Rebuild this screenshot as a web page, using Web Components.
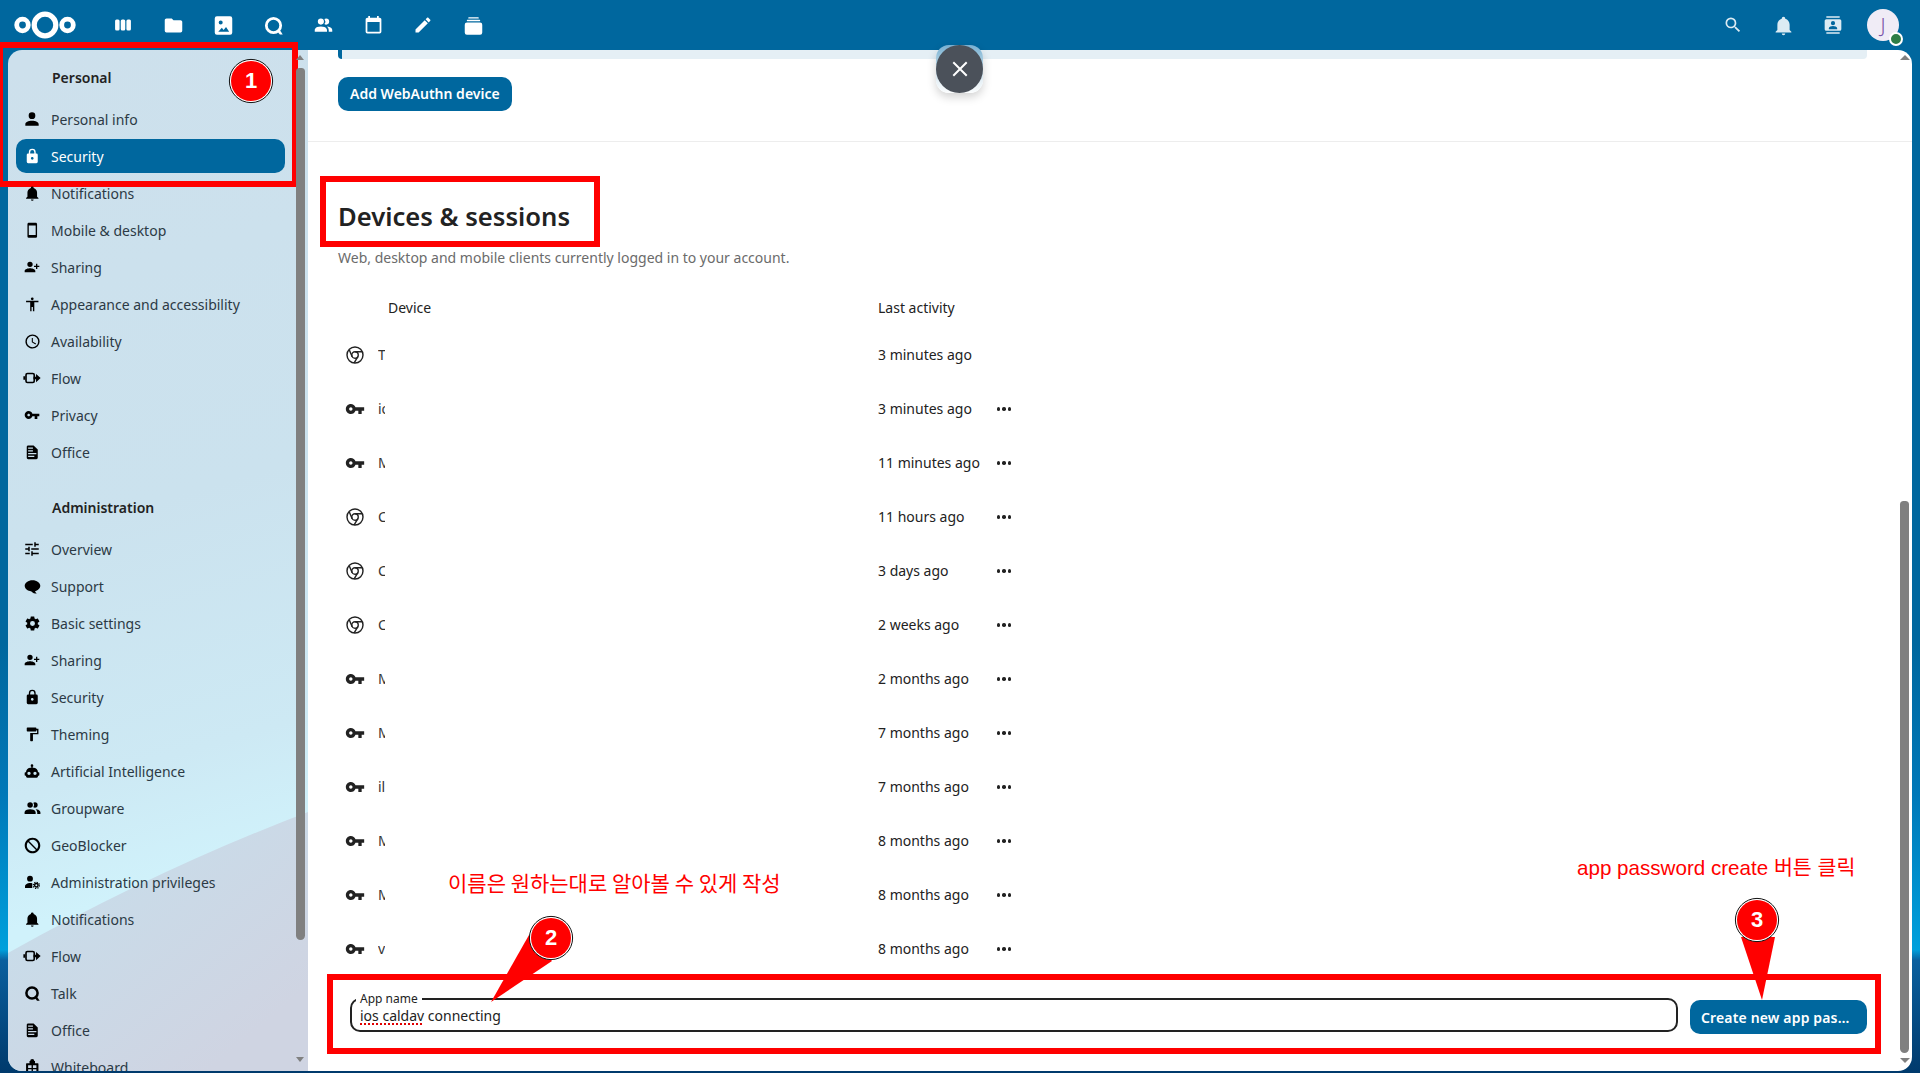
<!DOCTYPE html>
<html lang="en"><head><meta charset="utf-8"><title>Security</title>
<style>
html,body{margin:0;padding:0;height:1073px;overflow:hidden}
body{font:14px/20px "Noto Sans","Noto Sans CJK KR",sans-serif;color:#222;position:relative;
background:linear-gradient(180deg,#00679e 0,#00679e 60%,#0078b8 74%,#00a0dc 88.5%,#0a5f9e 89.5%,#003a6c 100%)}
</style></head><body>
<nc-app>
  <nc-header></nc-header>
  <nc-nav>
    <nc-caption>Personal</nc-caption>
    <nc-item icon="account">Personal info</nc-item>
    <nc-item icon="lock" active>Security</nc-item>
    <nc-item icon="bell">Notifications</nc-item>
    <nc-item icon="phone">Mobile &amp; desktop</nc-item>
    <nc-item icon="share">Sharing</nc-item>
    <nc-item icon="human">Appearance and accessibility</nc-item>
    <nc-item icon="clock">Availability</nc-item>
    <nc-item icon="flow">Flow</nc-item>
    <nc-item icon="key">Privacy</nc-item>
    <nc-item icon="doc">Office</nc-item>
    <nc-caption second>Administration</nc-caption>
    <nc-item icon="tune">Overview</nc-item>
    <nc-item icon="bubble">Support</nc-item>
    <nc-item icon="cog">Basic settings</nc-item>
    <nc-item icon="share">Sharing</nc-item>
    <nc-item icon="lock">Security</nc-item>
    <nc-item icon="roller">Theming</nc-item>
    <nc-item icon="robot">Artificial Intelligence</nc-item>
    <nc-item icon="group">Groupware</nc-item>
    <nc-item icon="cancel">GeoBlocker</nc-item>
    <nc-item icon="admin">Administration privileges</nc-item>
    <nc-item icon="bell">Notifications</nc-item>
    <nc-item icon="flow">Flow</nc-item>
    <nc-item icon="talk">Talk</nc-item>
    <nc-item icon="doc">Office</nc-item>
    <nc-item icon="board">Whiteboard</nc-item>
  </nc-nav>
  <nc-main>
    <nc-sessions>
      <nc-session icon="chrome" name="T" time="3 minutes ago" plain></nc-session>
      <nc-session icon="key" name="io" time="3 minutes ago"></nc-session>
      <nc-session icon="key" name="M" time="11 minutes ago"></nc-session>
      <nc-session icon="chrome" name="C" time="11 hours ago"></nc-session>
      <nc-session icon="chrome" name="C" time="3 days ago"></nc-session>
      <nc-session icon="chrome" name="C" time="2 weeks ago"></nc-session>
      <nc-session icon="key" name="M" time="2 months ago"></nc-session>
      <nc-session icon="key" name="M" time="7 months ago"></nc-session>
      <nc-session icon="key" name="il" time="7 months ago"></nc-session>
      <nc-session icon="key" name="M" time="8 months ago"></nc-session>
      <nc-session icon="key" name="M" time="8 months ago"></nc-session>
      <nc-session icon="key" name="v" time="8 months ago"></nc-session>
    </nc-sessions>
  </nc-main>
</nc-app>
<nc-close></nc-close>
<nc-frame style="left:-3px;top:42px;width:301px;height:145px"></nc-frame>
<nc-frame style="left:320px;top:176px;width:280px;height:71px"></nc-frame>
<nc-frame style="left:327px;top:974px;width:1554px;height:80px"></nc-frame>
<nc-callout n="1" style="left:229px;top:59px"></nc-callout>
<nc-callout n="2" tail="529,935 552,961 491,1002" style="left:529px;top:916px"></nc-callout>
<nc-callout n="3" tail="1741,937 1775,937 1762,1000" style="left:1735px;top:898px"></nc-callout>
<nc-note style="left:448px;top:867px">이름은 원하는대로 알아볼 수 있게 작성</nc-note>
<nc-note latin style="left:1577px;top:853px">app password create 버튼 클릭</nc-note>
<script>
const P={
account:'M12,4A4,4 0 0,1 16,8A4,4 0 0,1 12,12A4,4 0 0,1 8,8A4,4 0 0,1 12,4M12,14C16.42,14 20,15.79 20,18V20H4V18C4,15.79 7.58,14 12,14Z',
lock:'M12,17A2,2 0 0,0 14,15C14,13.89 13.1,13 12,13A2,2 0 0,0 10,15A2,2 0 0,0 12,17M18,8A2,2 0 0,1 20,10V20A2,2 0 0,1 18,22H6A2,2 0 0,1 4,20V10C4,8.89 4.9,8 6,8H7V6A5,5 0 0,1 12,1A5,5 0 0,1 17,6V8H18M12,3A3,3 0 0,0 9,6V8H15V6A3,3 0 0,0 12,3Z',
bell:'M21,19V20H3V19L5,17V11C5,7.9 7.03,5.17 10,4.29C10,4.19 10,4.1 10,4A2,2 0 0,1 12,2A2,2 0 0,1 14,4C14,4.1 14,4.19 14,4.29C16.97,5.17 19,7.9 19,11V17L21,19M14,21A2,2 0 0,1 12,23A2,2 0 0,1 10,21',
phone:'M17,19H7V5H17M17,1H7C5.89,1 5,1.89 5,3V21A2,2 0 0,0 7,23H17A2,2 0 0,0 19,21V3C19,1.89 18.1,1 17,1Z',
share:'M9,14C11.67,14 17,15.33 17,18V20H1V18C1,15.33 6.33,14 9,14M18,10V7H20V10H23V12H20V15H18V12H15V10M9,12A4,4 0 0,1 5,8A4,4 0 0,1 9,4A4,4 0 0,1 13,8A4,4 0 0,1 9,12Z',
human:'M21,9H15V22H13V16H11V22H9V9H3V7H21M12,2A2,2 0 0,1 14,4A2,2 0 0,1 12,6C10.89,6 10,5.1 10,4C10,2.89 10.89,2 12,2Z',
clock:'M12,20A8,8 0 0,0 20,12A8,8 0 0,0 12,4A8,8 0 0,0 4,12A8,8 0 0,0 12,20M12,2A10,10 0 0,1 22,12A10,10 0 0,1 12,22C6.47,22 2,17.5 2,12A10,10 0 0,1 12,2M12.5,7V12.25L17,14.92L16.25,16.15L11,13V7H12.5Z',
key:'M7 14C5.9 14 5 13.1 5 12S5.9 10 7 10 9 10.9 9 12 8.1 14 7 14M12.6 10C11.8 7.7 9.6 6 7 6C3.7 6 1 8.7 1 12S3.7 18 7 18C9.6 18 11.8 16.3 12.6 14H16V18H20V14H23V10H12.6Z',
doc:'M6,2H14L20,8V20A2,2 0 0,1 18,22H6C4.89,22 4,21.1 4,20V4C4,2.89 4.89,2 6,2M13,9H6V11H13V9M18,13H6V15H18V13M15,17H6V19H15V17M13,5H6V7H13V5Z',
tune:'M3,17V19H9V17H3M3,5V7H13V5H3M13,21V19H21V17H13V15H11V21H13M7,9V11H3V13H7V15H9V9H7M21,13V11H11V13H21M15,9H17V7H21V5H17V3H15V9Z',
bubble:'M12,3C18,3 23,6.6 23,11C23,15 19,18 15.5,18.6C16,20 17,21 18,22C15,22 12.5,21 10.5,18.9C5,18.4 1,15 1,11C1,6.6 6,3 12,3Z',
cog:'M12,15.5A3.5,3.5 0 0,1 8.5,12A3.5,3.5 0 0,1 12,8.5A3.5,3.5 0 0,1 15.5,12A3.5,3.5 0 0,1 12,15.5M19.43,12.97C19.47,12.65 19.5,12.33 19.5,12C19.5,11.67 19.47,11.34 19.43,11L21.54,9.37C21.73,9.22 21.78,8.95 21.66,8.73L19.66,5.27C19.54,5.05 19.27,4.96 19.05,5.05L16.56,6.05C16.04,5.66 15.5,5.32 14.87,5.07L14.5,2.42C14.46,2.18 14.25,2 14,2H10C9.75,2 9.54,2.18 9.5,2.42L9.13,5.07C8.5,5.32 7.96,5.66 7.44,6.05L4.95,5.05C4.73,4.96 4.46,5.05 4.34,5.27L2.34,8.73C2.21,8.95 2.27,9.22 2.46,9.37L4.57,11C4.53,11.34 4.5,11.67 4.5,12C4.5,12.33 4.53,12.65 4.57,12.97L2.46,14.63C2.27,14.78 2.21,15.05 2.34,15.27L4.34,18.73C4.46,18.95 4.73,19.03 4.95,18.95L7.44,17.94C7.96,18.34 8.5,18.68 9.13,18.93L9.5,21.58C9.54,21.82 9.75,22 10,22H14C14.25,22 14.46,21.82 14.5,21.58L14.87,18.93C15.5,18.67 16.04,18.34 16.56,17.94L19.05,18.95C19.27,19.03 19.54,18.95 19.66,18.73L21.66,15.27C21.78,15.05 21.73,14.78 21.54,14.63L19.43,12.97Z',
roller:'M18,4V3A1,1 0 0,0 17,2H5A1,1 0 0,0 4,3V7A1,1 0 0,0 5,8H17A1,1 0 0,0 18,7V6H19V10H9V21A1,1 0 0,0 10,22H12A1,1 0 0,0 13,21V12H21V4H18Z',
robot:'M12,2A2,2 0 0,1 14,4C14,4.74 13.6,5.39 13,5.73V7H14A7,7 0 0,1 21,14H22A1,1 0 0,1 23,15V18A1,1 0 0,1 22,19H21V20A2,2 0 0,1 19,22H5A2,2 0 0,1 3,20V19H2A1,1 0 0,1 1,18V15A1,1 0 0,1 2,14H3A7,7 0 0,1 10,7H11V5.73C10.4,5.39 10,4.74 10,4A2,2 0 0,1 12,2M7.5,13A2.5,2.5 0 0,0 5,15.5A2.5,2.5 0 0,0 7.5,18A2.5,2.5 0 0,0 10,15.5A2.5,2.5 0 0,0 7.5,13M16.5,13A2.5,2.5 0 0,0 14,15.5A2.5,2.5 0 0,0 16.5,18A2.5,2.5 0 0,0 19,15.5A2.5,2.5 0 0,0 16.5,13Z',
group:'M16 17V19H2V17S2 13 9 13 16 17 16 17M12.5 7.5A3.5 3.5 0 1 0 9 11A3.5 3.5 0 0 0 12.5 7.5M15.94 13A5.32 5.32 0 0 1 18 17V19H22V17S22 13.37 15.94 13M15 4A3.39 3.39 0 0 0 13.07 4.59A5 5 0 0 1 13.07 10.41A3.39 3.39 0 0 0 15 11A3.5 3.5 0 0 0 15 4Z',
cancel:'M12 1C18 1 23 6 23 12S18 23 12 23 1 18 1 12 6 1 12 1M12 4C10.1 4 8.4 4.6 7.1 5.7L18.3 16.9C19.3 15.5 20 13.8 20 12C20 7.6 16.4 4 12 4M16.9 18.3L5.7 7.1C4.6 8.4 4 10.1 4 12C4 16.4 7.6 20 12 20C13.9 20 15.6 19.4 16.9 18.3Z',
folder:'M10,4H4C2.89,4 2,4.89 2,6V18A2,2 0 0,0 4,20H20A2,2 0 0,0 22,18V8C22,6.89 21.1,6 20,6H12L10,4Z',
calendar:'M19,19H5V8H19M16,1V3H8V1H6V3H5C3.89,3 3,3.89 3,5V19A2,2 0 0,0 5,21H19A2,2 0 0,0 21,19V5C21,3.89 20.1,3 19,3H18V1',
pencil:'M20.71,7.04C21.1,6.65 21.1,6 20.71,5.63L18.37,3.29C18,2.9 17.35,2.9 16.96,3.29L15.12,5.12L18.87,8.87M3,17.25V21H6.75L17.81,9.93L14.06,6.18L3,17.25Z',
search:'M9.5,3A6.5,6.5 0 0,1 16,9.5C16,11.11 15.41,12.59 14.44,13.73L14.71,14H15.5L20.5,19L19,20.5L14,15.5V14.71L13.73,14.44C12.59,15.41 11.11,16 9.5,16A6.5,6.5 0 0,1 3,9.5A6.5,6.5 0 0,1 9.5,3M9.5,5C7,5 5,7 5,9.5C5,12 7,14 9.5,14C12,14 14,12 14,9.5C14,7 12,5 9.5,5Z'
};
const X={
flow:'<rect x="4" y="6" width="11" height="12" rx="2" fill="none" stroke="currentColor" stroke-width="2.2"/><path d="M.5 9.8h2.5v4.4H.5zM14 10.2h3.4V6.5L23.5 12l-6.1 5.5v-3.7H14z"/>',
admin:'<circle cx="9" cy="7" r="4.4"/><path d="M1.5 21v-2.6c0-3 4-5 7.5-5 1.2 0 2.3.2 3.4.6V21z"/><circle cx="18.5" cy="17" r="2.6" fill="none" stroke="currentColor" stroke-width="2.2"/><circle cx="18.5" cy="17" r="4.6" fill="none" stroke="currentColor" stroke-width="1.8" stroke-dasharray="1.8 1.8"/>',
talk:'<circle cx="12" cy="12" r="8.4" fill="none" stroke="currentColor" stroke-width="3.8"/><path d="M16 19l2.5-3 5 7.5h-4z"/>',
board:'<path fill-rule="evenodd" d="M9 3a3 3 0 0 1 6 0h1v3h4a1 1 0 0 1 1 1v13a1 1 0 0 1-1 1H4a1 1 0 0 1-1-1V7a1 1 0 0 1 1-1h4V3zM6 9v4h5V9zm7 0v4h5V9zm-7 6v4h5v-4zm7 0v4h5v-4z"/>',
apps:'<rect x="2.5" y="5.5" width="5.4" height="13" rx="1.8"/><rect x="9.3" y="5.5" width="5.4" height="13" rx="1.8"/><rect x="16.1" y="5.5" width="5.4" height="13" rx="1.8"/>',
photos:'<path fill-rule="evenodd" d="M4.5 1.5h15a2.5 2.5 0 0 1 2.5 2.5v16a2.5 2.5 0 0 1-2.5 2.5h-15A2.5 2.5 0 0 1 2 20V4a2.5 2.5 0 0 1 2.5-2.5zM6 19h12.5l-3.6-5.2-2.8 3.2-2-2.4zM8.8 6.3a2.3 2.3 0 1 0 0 4.6 2.3 2.3 0 0 0 0-4.6z"/>',
talkh:'<circle cx="12" cy="12" r="8.2" fill="none" stroke="currentColor" stroke-width="3.2"/><path d="M16.5 19l2-3 4 6.4h-3.2z"/>',
deck:'<rect x="6" y="2.5" width="12" height="1.6" rx=".5"/><rect x="4.4" y="5.4" width="15.2" height="1.8" rx=".5"/><path d="M4.5 8.5h15A2.5 2.5 0 0 1 22 11v9a2.5 2.5 0 0 1-2.5 2.5h-15A2.5 2.5 0 0 1 2 20v-9a2.5 2.5 0 0 1 2.5-2.5z"/>',
contacts:'<rect x="4" y="1.5" width="16" height="1.8" /><rect x="4" y="20.7" width="16" height="1.8"/><path fill-rule="evenodd" d="M4 5h16a2 2 0 0 1 2 2v10a2 2 0 0 1-2 2H4a2 2 0 0 1-2-2V7a2 2 0 0 1 2-2zm8 2.3a2.5 2.5 0 1 0 0 5 2.5 2.5 0 0 0 0-5zM7 17h10v-1.2c0-1.6-3-2.5-5-2.5s-5 .9-5 2.5z"/>',
chrome:'<g fill="none" stroke="currentColor" stroke-width="1.7"><circle cx="12" cy="12" r="9.6"/><circle cx="12" cy="12" r="3.9"/><path d="M12 8.1H20.4M8.6 14 5.2 6M15.4 14 11 21.4"/></g>'
};
const NAVSIZE={account:20,tune:18,group:19,share:16,key:16,cancel:17,flow:18,bubble:17,cog:17,robot:16,clock:17,talk:16,admin:16};
function ic(n,s){const body=P[n]?`<path d="${P[n]}"/>`:X[n];return `<svg xmlns="http://www.w3.org/2000/svg" width="${s}" height="${s}" viewBox="0 0 24 24" fill="currentColor" style="display:block;flex:none">${body}</svg>`}
function def(name,html,init){customElements.define(name,class extends HTMLElement{constructor(){super();this.attachShadow({mode:'open'})}
 connectedCallback(){this.shadowRoot.innerHTML=typeof html==='function'?html(this):html;init&&init(this)}})}

def('nc-app',`<style>:host{display:grid;grid-template-columns:300px 1604px;grid-template-rows:50px 1021px;padding:0 8px;height:1073px;box-sizing:border-box}
::slotted(nc-header){grid-column:1/3;margin:0 -8px}</style><slot></slot>`);

def('nc-header',()=>{
 const L=['apps','folder','photos','talkh','group','calendar','pencil','deck'];
 return `<style>:host{display:flex;align-items:center;height:50px;color:#fff}
 .logo{margin-left:12px;width:66px;flex:none}
 .apps{display:flex;margin-left:20px}.b{width:50px;height:50px;display:flex;align-items:center;justify-content:center}
 .right{margin-left:auto;display:flex;color:#dcebf3;margin-right:12px}
 .av{width:32px;height:32px;border-radius:50%;background:#f0ecf6;color:#7a52a8;font:300 20px/32px "Noto Sans",sans-serif;text-align:center;position:relative;margin:9px}
 .dot{position:absolute;left:22px;top:23px;width:10px;height:10px;border-radius:50%;background:#2e7d46;border:2px solid #fff}
 </style>
 <svg class="logo" viewBox="0 0 66 30" height="30"><g fill="none" stroke="#fff"><circle cx="10.5" cy="15" r="5.8" stroke-width="4.8"/><circle cx="33" cy="15" r="10.8" stroke-width="5.2"/><circle cx="55.5" cy="15" r="5.8" stroke-width="4.8"/></g></svg>
 <div class="apps">${L.map(n=>`<div class="b">${ic(n,n==='pencil'||n==='apps'?20:21)}</div>`).join('')}</div>
 <div class="right"><div class="b">${ic('search',20)}</div><div class="b">${ic('bell',21)}</div><div class="b">${ic('contacts',20)}</div><div class="av">J<span class="dot"></span></div></div>`});

def('nc-nav',`<style>:host{display:block;position:relative;height:1021px;overflow:hidden;border-radius:14px 0 0 14px}
 .bg{position:absolute;left:0;top:0;z-index:0}
 .list{position:relative;z-index:1;padding:10px 0 0 8px}
 .sb{position:absolute;left:288px;width:9px;background:#808080;z-index:2}
 .ar{position:absolute;left:288px;width:0;height:0;border-left:4.5px solid transparent;border-right:4.5px solid transparent;z-index:2}
 </style>
 <svg class="bg" width="300" height="1021" viewBox="0 0 300 1021"><defs>
 <linearGradient id="u" gradientUnits="userSpaceOnUse" x1="60" y1="0" x2="288" y2="800"><stop offset="0" stop-color="#cde0ec"/><stop offset=".55" stop-color="#cbe2ee"/><stop offset=".85" stop-color="#cde9f4"/><stop offset="1" stop-color="#d0f2fb"/></linearGradient>
 <linearGradient id="l" gradientUnits="userSpaceOnUse" x1="0" y1="780" x2="200" y2="1021"><stop offset="0" stop-color="#c6dfec"/><stop offset="1" stop-color="#cfd4e2"/></linearGradient></defs>
 <rect width="300" height="1021" fill="url(#u)"/><path d="M0 903Q150 819 300 762V1021H0Z" fill="url(#l)"/></svg>
 <div class="ar" style="top:5px;border-bottom:5px solid #808080"></div>
 <div class="sb" style="top:18px;height:872px;border-radius:4px 4px 5px 5px"></div>
 <div class="ar" style="top:1007px;border-top:5px solid #808080"></div>
 <div class="list"><slot></slot></div>`);

def('nc-caption',`<style>:host{display:block;height:34px;line-height:36px;padding-left:36px;font-weight:600;font-size:14px;color:#222;margin-bottom:8px}
 :host([second]){margin-top:21px}</style><slot></slot>`);

def('nc-item',el=>`<style>:host{display:flex;align-items:center;height:34px;margin-bottom:3px;border-radius:10px;width:269px;color:#2c3a45;font-size:14px}
 :host([active]){background:#00679e;color:#fff}
 .i{width:32px;display:flex;justify-content:center;color:#000;flex:none}
 :host([active]) .i{color:#fff}
 .t{margin-left:3px;white-space:nowrap;padding-top:1px}</style>
 <span class="i">${ic(el.getAttribute('icon'),NAVSIZE[el.getAttribute('icon')]||16.5)}</span><span class="t"><slot></slot></span>`);

def('nc-main',`<style>:host{display:flex;flex-direction:column;background:#fff;border-radius:0 14px 14px 0;height:1021px;position:relative;overflow:hidden}
 .band{height:9px;margin:0 45px 0 30px;background:#e5eff5;border-left:4px solid #00679e;border-radius:0 0 4px 4px;flex:none}
 .top{padding:18px 30px 30px;border-bottom:1px solid #ededed;flex:none;height:34px}
 .btn{display:inline-block;height:34px;line-height:34px;padding:0 12px;background:#00679e;color:#fff;border-radius:10px;font-weight:600;font-size:14px}
 .sec{padding:60px 45px 0 30px;flex:1}
 h2{margin:0;font-size:25.6px;line-height:30px;font-weight:600;color:#222}
 p{margin:16px 0 0;color:#6b6b6b;font-size:14px;line-height:20px}
 .sb{position:absolute;left:1592px;top:451px;width:9px;height:552px;background:#808080;border-radius:4px 4px 5px 5px}
 .ar{position:absolute;left:1592px;width:0;height:0;border-left:5px solid transparent;border-right:5px solid transparent}
 </style>
 <div class="band"></div>
 <div class="top"><span class="btn">Add WebAuthn device</span></div>
 <div class="sec"><h2>Devices &amp; sessions</h2><p>Web, desktop and mobile clients currently logged in to your account.</p><slot></slot></div>
 <div class="ar" style="top:5px;border-bottom:5px solid #808080"></div><div class="sb"></div><div class="ar" style="top:1008px;border-top:5px solid #808080"></div>`);

def('nc-sessions',`<style>:host{display:block}
 .h{display:grid;grid-template-columns:50px 490px auto;margin-top:30px;height:20px;line-height:20px;font-size:14px;color:#222;margin-bottom:10px}
 .form{display:flex;gap:12px;margin:22px 0 0 12px}
 .in{flex:1;height:34px;box-sizing:border-box;border:2px solid #222;border-radius:10px;position:relative;padding-left:8px;line-height:32px;font-size:14px;white-space:nowrap}
 .lg{position:absolute;left:4px;top:-9px;background:#fff;padding:0 4px;font-size:12px;line-height:16px;color:#222}
 u{text-decoration:underline dotted #e00000 1.5px;text-underline-offset:2px}
 .b{width:177px;box-sizing:border-box;padding-left:11px;height:34px;line-height:36px;margin-top:2px;background:#00679e;color:#fff;border-radius:10px;font-weight:600;font-size:14px;letter-spacing:.15px;flex:none;white-space:nowrap}
 </style>
 <div class="h"><span></span><span>Device</span><span>Last activity</span></div>
 <slot></slot>
 <div class="form"><div class="in"><span class="lg">App name</span><span><u>ios caldav</u> connecting</span></div><div class="b">Create new app pas…</div></div>`);

def('nc-session',el=>`<style>:host{display:grid;grid-template-columns:40px 500px 126px 30px;align-items:center;height:54px;font-size:14px;color:#222}
 .i{display:flex;padding-left:7px;color:#222}
 .n{width:7px;overflow:hidden;white-space:nowrap;color:#333}
 .d{display:flex;gap:2px;justify-content:flex-start;margin-left:-7px;}
 .d i{width:3.4px;height:3.4px;border-radius:50%;background:#222;display:block}
 </style><span class="i">${ic(el.getAttribute('icon'),20)}</span><span><div class="n">${el.getAttribute('name')}</div></span><span>${el.getAttribute('time')}</span>
 ${el.hasAttribute('plain')?'<span></span>':'<span class="d"><i></i><i></i><i></i></span>'}`);

def('nc-close',`<style>:host{position:absolute;left:936px;top:45px;width:47px;height:48px;border-radius:13px;background:linear-gradient(180deg,#78b0d2 0,#a5cbe0 30%,#e6f0f6 75%,#fbfdfe 100%);box-shadow:0 4px 10px rgba(0,0,0,.18)}
 .c{position:absolute;inset:0;border-radius:50%;background:#4b515a;display:flex;align-items:center;justify-content:center}</style>
 <div class="c"><svg width="16" height="16" viewBox="0 0 16 16"><path d="M2 2 14 14M14 2 2 14" stroke="#fff" stroke-width="2" stroke-linecap="square"/></svg></div>`);

def('nc-frame',`<style>:host{position:absolute;box-sizing:border-box;border:6px solid #f00;pointer-events:none}</style>`);

def('nc-callout',el=>{const t=el.getAttribute('tail');
 const l=parseFloat(el.style.left),tp=parseFloat(el.style.top);
 const pts=t?t.split(' ').map(p=>{const[a,b]=p.split(',');return (a-l)+','+(b-tp)}).join(' '):'';
 return `<style>:host{position:absolute;width:44px;height:44px}
 svg{position:absolute;left:0;top:0;overflow:visible}
 .n{position:absolute;inset:0;text-align:center;font:700 22px/44px "Liberation Sans",sans-serif;color:#fff}</style>
 <svg width="44" height="44">${t?`<polygon points="${pts}" fill="#f00"/>`:''}<circle cx="22" cy="22" r="21.6" fill="#fff" stroke="#111" stroke-width="1"/><circle cx="22" cy="22" r="20" fill="#f00"/></svg><div class="n">${el.getAttribute('n')}</div>`});

def('nc-note',`<style>:host{position:absolute;color:#f00;font:21px/30px "Noto Sans CJK KR",sans-serif;white-space:nowrap}
 :host([latin]){font:20.6px/30px "Liberation Sans","Noto Sans CJK KR",sans-serif}</style><slot></slot>`);
</script>
</body></html>
